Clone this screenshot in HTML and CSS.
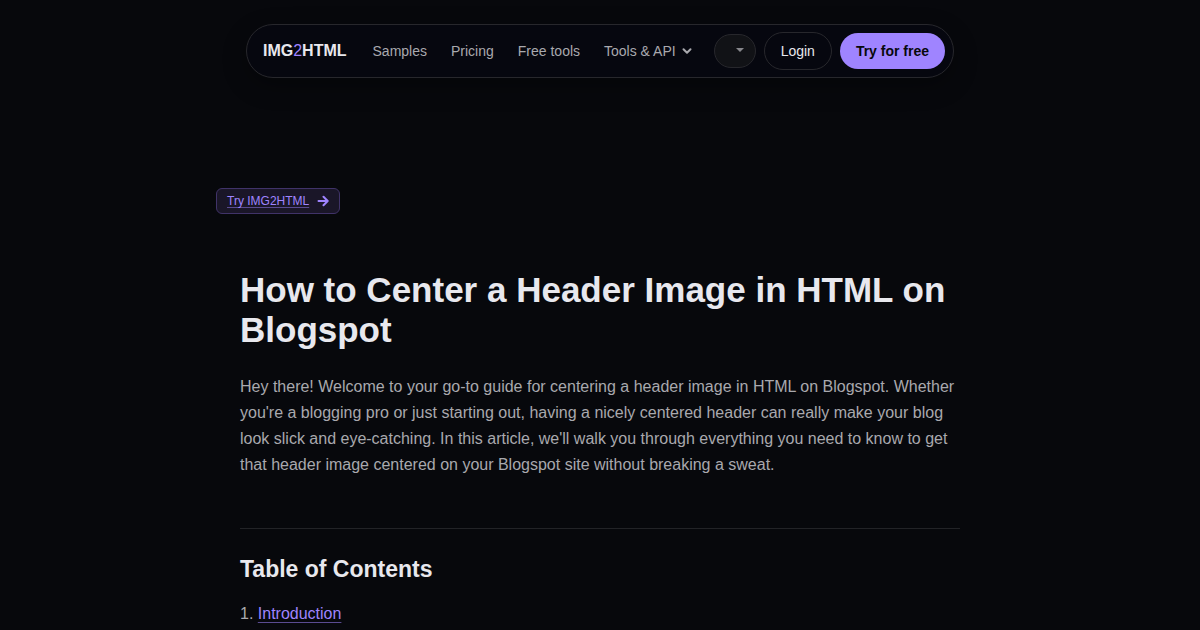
FILE: index.html
```html
<!DOCTYPE html>
<html lang="en">
<head>
<meta charset="utf-8">
<meta name="viewport" content="width=device-width, initial-scale=1">
<title>How to Center a Header Image in HTML on Blogspot</title>
<link rel="stylesheet" href="styles.css">
</head>
<body>
<header class="site-header">
  <div class="navbar">
    <a class="brand" href="#">IMG<span class="brand-accent">2</span>HTML</a>
    <nav class="nav-links" aria-label="Main">
      <a class="nav-link" href="#">Samples</a>
      <a class="nav-link" href="#">Pricing</a>
      <a class="nav-link" href="#">Free tools</a>
      <button class="nav-link nav-menu" type="button" aria-haspopup="true">Tools &amp; API
        <svg class="chevron" viewBox="0 0 10 10" aria-hidden="true"><path d="M1.5 3.2 5 6.7 8.5 3.2"/></svg>
      </button>
    </nav>
    <div class="actions">
      <span class="language">
        <select class="language-select" aria-label="Language"><option value=""></option></select>
        <svg class="caret" viewBox="0 0 8 4" aria-hidden="true"><path d="M0 0h8L4 4z"/></svg>
      </span>
      <a class="button button-outline" href="#">Login</a>
      <a class="button button-primary" href="#">Try for free</a>
    </div>
  </div>
</header>
<main class="page">
  <a class="promo" href="#"><span class="promo-text">Try IMG2HTML</span>
    <svg class="arrow" viewBox="0 0 12 12" aria-hidden="true"><path d="M1.5 6h9M6.5 1.8 10.7 6 6.5 10.2"/></svg>
  </a>
  <article class="article">
    <h1 class="title">How to Center a Header Image in HTML on Blogspot</h1>
    <p class="intro">Hey there! Welcome to your go-to guide for centering a header image in HTML on Blogspot. Whether you're a blogging pro or just starting out, having a nicely centered header can really make your blog look slick and eye-catching. In this article, we'll walk you through everything you need to know to get that header image centered on your Blogspot site without breaking a sweat.</p>
    <section class="contents">
      <h2 class="contents-title">Table of Contents</h2>
      <ol class="contents-list">
        <li><a class="contents-link" href="#introduction">Introduction</a></li>
      </ol>
    </section>
  </article>
</main>
</body>
</html>
```
FILE: styles.css
```css
* { box-sizing: border-box; }

body {
  margin: 0;
  background: #07080c;
  color: #a9a9ae;
  font-family: "Liberation Sans", Arial, sans-serif;
  font-size: 16px;
  line-height: 26px;
}

.site-header {
  display: flex;
  justify-content: center;
  padding-top: 24px;
}

.navbar {
  display: flex;
  align-items: center;
  gap: 22px;
  padding: 7px 8px 7px 16px;
  border: 1px solid #27272c;
  border-radius: 27px;
  background: #06070f;
  box-shadow: 0 8px 24px rgba(0, 0, 0, 0.3);
}

.brand {
  margin-right: 4px;
  color: #e8e8ee;
  font-size: 16px;
  font-weight: 700;
  line-height: 24px;
  text-decoration: none;
}

.brand-accent {
  color: #9f84ff;
  font-weight: 400;
}

.nav-links {
  display: flex;
  align-items: center;
  gap: 24px;
}

.nav-link {
  color: #a9a9ae;
  font-size: 14px;
  line-height: 20px;
  text-decoration: none;
}

.nav-menu {
  display: flex;
  align-items: center;
  gap: 6px;
  padding: 0;
  border: 0;
  background: none;
  font-family: inherit;
}

.chevron {
  width: 10px;
  height: 10px;
  fill: none;
  stroke: currentColor;
  stroke-width: 2;
  stroke-linecap: round;
  stroke-linejoin: round;
}

.actions {
  display: flex;
  align-items: center;
  gap: 8px;
}

.language {
  position: relative;
  display: flex;
}

.language-select {
  appearance: none;
  width: 42px;
  height: 34px;
  padding: 0;
  border: 1px solid #27272c;
  border-radius: 17px;
  background: #111216;
  color: #a9a9ae;
}

.caret {
  position: absolute;
  top: 14px;
  right: 12px;
  width: 8px;
  height: 4px;
  fill: #87878c;
  pointer-events: none;
}

.button {
  padding: 8px 16px;
  border-radius: 19px;
  font-size: 14px;
  line-height: 20px;
  text-decoration: none;
}

.button-outline {
  border: 1px solid #27272c;
  color: #e8e8ee;
}

.button-primary {
  background: #9f84ff;
  color: #07080c;
  font-weight: 700;
}

.page {
  max-width: 768px;
  margin: 0 auto;
  padding-top: 110px;
}

.promo {
  display: flex;
  align-items: center;
  gap: 8px;
  width: fit-content;
  padding: 4px 10px;
  border: 1px solid #403369;
  border-radius: 6px;
  background: #1a1628;
  color: #9f84ff;
  font-size: 12px;
  line-height: 16px;
  text-decoration: underline;
  text-decoration-color: #5a4b91;
  text-decoration-thickness: 1px;
  text-underline-offset: 2px;
}

.arrow {
  width: 12px;
  height: 12px;
  fill: none;
  stroke: currentColor;
  stroke-width: 2;
  stroke-linecap: round;
  stroke-linejoin: round;
}

.article {
  padding: 56px 24px;
}

.title {
  margin: 0 0 24px;
  color: #e8e8ee;
  font-size: 35px;
  font-weight: 700;
  line-height: 40px;
}

.intro { margin: 0; }

.contents {
  margin-top: 50px;
  padding-top: 24px;
  border-top: 1px solid #222327;
}

.contents-title {
  margin: 0 0 16px;
  color: #e8e8ee;
  font-size: 23px;
  line-height: 32px;
}

.contents-list {
  margin: 0;
  padding: 0;
  list-style: decimal inside;
}

.contents-link {
  color: #9f84ff;
  text-decoration: underline;
  text-decoration-color: #5a4b91;
  text-decoration-thickness: 1px;
  text-underline-offset: 3px;
}
```
